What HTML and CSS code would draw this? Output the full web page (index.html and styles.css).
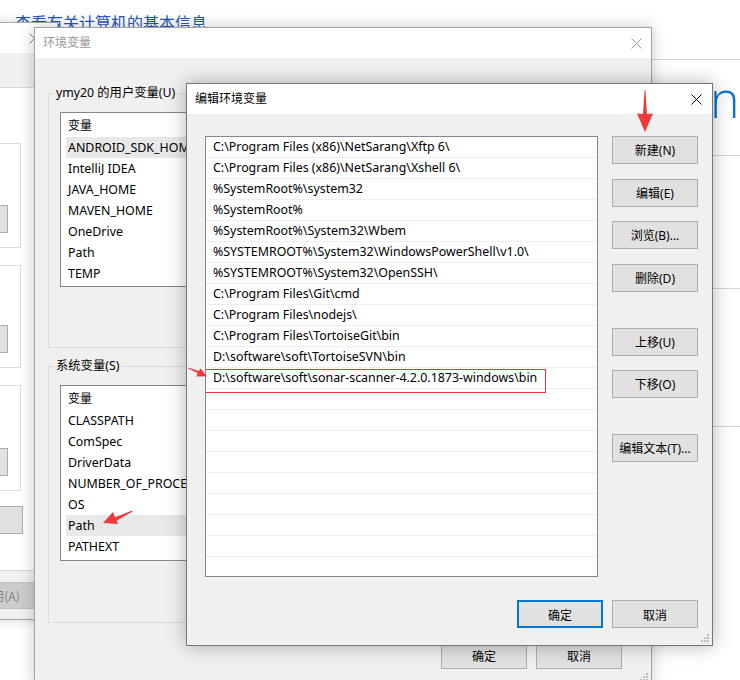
FILE: index.html
```html
<!DOCTYPE html>
<html lang="zh-CN">
<head>
<meta charset="utf-8">
<title>编辑环境变量</title>
<link rel="stylesheet" href="styles.css">
</head>
<body>
<div class="desktop">

  <div class="cp">
    <div class="cp-main">
      <div class="cp-title">查看有关计算机的基本信息</div>
    </div>
    <div class="cp-side">
      <div class="cp-rule rule-a"></div>
      <div class="cp-logo">n</div>
      <div class="cp-rule rule-b"></div>
      <div class="cp-rule rule-c"></div>
      <div class="cp-rule rule-d"></div>
    </div>
  </div>

  <div class="win sys">
    <div class="titlebar sys-title">
      <span class="tb-text"></span>
      <span class="x-btn"><svg width="11" height="11" viewBox="0 0 11 11"><path d="M0.5 0.5L10.5 10.5M10.5 0.5L0.5 10.5" stroke="#8a8a8a" stroke-width="1" fill="none"/></svg></span>
    </div>
    <div class="sys-tabs"></div>
    <div class="sys-page">
      <div class="sys-group g1"><div class="btn sys-btn"></div></div>
      <div class="sys-group g2"><div class="btn sys-btn"></div></div>
      <div class="sys-group g3"><div class="btn sys-btn"></div></div>
      <div class="btn sys-envbtn"></div>
    </div>
    <div class="sys-footer">
      <div class="btn btn-disabled">应用(A)</div>
    </div>
  </div>

  <div class="win env">
    <div class="titlebar">
      <span class="tb-text tb-inactive">环境变量</span>
      <span class="x-btn"><svg width="11" height="11" viewBox="0 0 11 11"><path d="M0.5 0.5L10.5 10.5M10.5 0.5L0.5 10.5" stroke="#9a9a9a" stroke-width="1" fill="none"/></svg></span>
    </div>
    <div class="env-body">
      <fieldset class="group g-user">
        <legend>ymy20 的用户变量(U)</legend>
        <div class="lv lv-user">
          <div class="lv-head">变量</div>
          <div class="lv-row sel">ANDROID_SDK_HOME</div>
          <div class="lv-row">IntelliJ IDEA</div>
          <div class="lv-row">JAVA_HOME</div>
          <div class="lv-row">MAVEN_HOME</div>
          <div class="lv-row">OneDrive</div>
          <div class="lv-row">Path</div>
          <div class="lv-row">TEMP</div>
        </div>
      </fieldset>
      <fieldset class="group g-sys">
        <legend>系统变量(S)</legend>
        <div class="lv lv-sys">
          <div class="lv-head">变量</div>
          <div class="lv-row">CLASSPATH</div>
          <div class="lv-row">ComSpec</div>
          <div class="lv-row">DriverData</div>
          <div class="lv-row">NUMBER_OF_PROCESSORS</div>
          <div class="lv-row">OS</div>
          <div class="lv-row sel">Path</div>
          <div class="lv-row">PATHEXT</div>
        </div>
      </fieldset>
      <div class="env-footer">
        <div class="btn">确定</div>
        <div class="btn">取消</div>
      </div>
    </div>
    <svg class="grip" width="8" height="8" viewBox="0 0 8 8"><g fill="#bdbdbd"><rect x="6" y="0" width="2" height="2"/><rect x="3" y="3" width="2" height="2"/><rect x="6" y="3" width="2" height="2"/><rect x="0" y="6" width="2" height="2"/><rect x="3" y="6" width="2" height="2"/><rect x="6" y="6" width="2" height="2"/></g></svg>
  </div>

  <div class="win edit">
    <div class="titlebar">
      <span class="tb-text">编辑环境变量</span>
      <span class="x-btn x-edit"><svg width="11" height="11" viewBox="0 0 11 11"><path d="M0.5 0.5L10.5 10.5M10.5 0.5L0.5 10.5" stroke="#000" stroke-width="1" fill="none"/></svg></span>
    </div>
    <div class="edit-body">
      <div class="edit-main">
        <div class="pl">
          <div class="pl-row">C:\Program Files (x86)\NetSarang\Xftp 6\</div>
          <div class="pl-row">C:\Program Files (x86)\NetSarang\Xshell 6\</div>
          <div class="pl-row">%SystemRoot%\system32</div>
          <div class="pl-row">%SystemRoot%</div>
          <div class="pl-row">%SystemRoot%\System32\Wbem</div>
          <div class="pl-row">%SYSTEMROOT%\System32\WindowsPowerShell\v1.0\</div>
          <div class="pl-row">%SYSTEMROOT%\System32\OpenSSH\</div>
          <div class="pl-row">C:\Program Files\Git\cmd</div>
          <div class="pl-row">C:\Program Files\nodejs\</div>
          <div class="pl-row">C:\Program Files\TortoiseGit\bin</div>
          <div class="pl-row">D:\software\soft\TortoiseSVN\bin</div>
          <div class="pl-row marked">D:\software\soft\sonar-scanner-4.2.0.1873-windows\bin</div>
          <div class="pl-row"></div>
          <div class="pl-row"></div>
          <div class="pl-row"></div>
          <div class="pl-row"></div>
          <div class="pl-row"></div>
          <div class="pl-row"></div>
          <div class="pl-row"></div>
          <div class="pl-row"></div>
          <div class="pl-row"></div>
          <div class="pl-row"></div>
        </div>
        <div class="edit-btns">
          <div class="btn b-new">新建(N)</div>
          <div class="btn b-edit">编辑(E)</div>
          <div class="btn b-browse">浏览(B)...</div>
          <div class="btn b-del">删除(D)</div>
          <div class="btn b-up">上移(U)</div>
          <div class="btn b-down">下移(O)</div>
          <div class="btn b-text">编辑文本(T)...</div>
        </div>
      </div>
      <div class="edit-footer">
        <div class="btn btn-default">确定</div>
        <div class="btn">取消</div>
      </div>
    </div>
    <svg class="grip" width="8" height="8" viewBox="0 0 8 8"><g fill="#bdbdbd"><rect x="6" y="0" width="2" height="2"/><rect x="3" y="3" width="2" height="2"/><rect x="6" y="3" width="2" height="2"/><rect x="0" y="6" width="2" height="2"/><rect x="3" y="6" width="2" height="2"/><rect x="6" y="6" width="2" height="2"/></g></svg>
  </div>

  <svg class="marks" width="740" height="680" viewBox="0 0 740 680">
    <g fill="#f0393b">
      <polygon points="644.6,90 645.4,90 647,114 653,113.5 645,132 637,113.5 643,114"/>
      <polygon points="132.3,510.4 132.7,511.4 116.8,520.5 118,524 103,523 113,512 115,517.2"/>
      <polygon points="188,367.6 188.3,368.4 197.6,373 196.5,376.6 206.8,376.2 200.4,368.2 199,370.9"/>
    </g>
  </svg>
</div>
</body>
</html>
```

FILE: styles.css
```css
* { box-sizing: border-box; }

html, body {
  margin: 0;
  padding: 0;
}

body {
  width: 740px;
  height: 680px;
  overflow: hidden;
  background: #fff;
  font-family: "Noto Sans", "Noto Sans CJK SC", sans-serif;
  font-size: 12px;
  color: #000;
}

.desktop {
  position: relative;
  width: 740px;
  height: 680px;
  overflow: hidden;
}

/* ---------- control panel page behind ---------- */
.cp {
  display: flex;
  width: 740px;
  height: 680px;
}

.cp-main {
  width: 640px;
  padding: 12px 0 0 15px;
}

.cp-title {
  font-family: "Noto Sans CJK SC", sans-serif;
  font-size: 16px;
  line-height: 20px;
  color: #2256b8;
  white-space: nowrap;
}

.cp-side {
  flex: 1;
  display: flex;
  flex-direction: column;
}

.cp-rule {
  height: 1px;
  background: #d4d4d4;
}

.rule-a { margin-top: 59px; }

.cp-logo {
  margin-top: 14px;
  padding-left: 70px;
  font-family: "Open Sans", "Noto Sans", sans-serif;
  font-weight: 300;
  font-size: 50px;
  line-height: 50px;
  color: #0a74cf;
}

.rule-b { margin-top: 31px; }
.rule-c { margin-top: 132px; }
.rule-d { margin-top: 137px; }

/* ---------- generic window ---------- */
.win {
  position: absolute;
  background: #f0f0f0;
  display: flex;
  flex-direction: column;
}

.titlebar {
  height: 30px;
  flex: none;
  background: #fff;
  display: flex;
  align-items: center;
  justify-content: space-between;
  padding-left: 8px;
}

.tb-text {
  font-family: "Noto Sans CJK SC", sans-serif;
  font-size: 12px;
  line-height: 16px;
  margin-top: -2px;
  white-space: nowrap;
}

.tb-inactive { color: #999; }

.x-btn {
  width: 30px;
  height: 30px;
  display: flex;
  align-items: center;
  justify-content: center;
}

.btn {
  height: 28px;
  background: #e1e1e1;
  border: 1px solid #adadad;
  display: flex;
  align-items: center;
  justify-content: center;
  font-family: "Noto Sans", "Noto Sans CJK SC", sans-serif;
  font-size: 12px;
  white-space: nowrap;
  flex: none;
}

.grip {
  position: absolute;
  right: 3px;
  bottom: 3px;
}

/* ---------- system properties (back) ---------- */
.sys {
  left: -402px;
  top: 22px;
  width: 460px;
  height: 598px;
  border: 1px solid #a9a9a9;
  box-shadow: 0 0 10px rgba(0, 0, 0, 0.18);
}

.sys-title .x-btn {
  width: 46px;
}

.sys-tabs {
  height: 34px;
  flex: none;
  background: #f0f0f0;
}

.sys-page {
  height: 484px;
  flex: none;
  margin: 0 7px;
  background: #fff;
  border: 1px solid #d9d9d9;
  padding: 55px 28px 0 0;
  display: flex;
  flex-direction: column;
  align-items: stretch;
}

.sys-group {
  border: 1px solid #dcdcdc;
  display: flex;
  justify-content: flex-end;
  align-items: flex-end;
  padding: 0 12px 14px 0;
}

.g1 { height: 105px; }
.g2 { height: 103px; margin-top: 17px; }
.g3 { height: 106px; margin-top: 17px; }

.sys-btn { width: 76px; }

.sys-envbtn {
  width: 120px;
  align-self: flex-end;
  margin: 15px -2px 0 0;
}

.sys-footer {
  flex: 1;
  display: flex;
  justify-content: flex-end;
  padding: 11px 16px 0 0;
}

.btn-disabled {
  width: 82px;
  height: 27px;
  background: #cccccc;
  border-color: #bfbfbf;
  color: #838383;
  font-family: "Noto Sans CJK SC", sans-serif;
}

/* ---------- 环境变量 window ---------- */
.env {
  left: 34px;
  top: 27px;
  width: 618px;
  height: 658px;
  border: 1px solid #a3a3a3;
  box-shadow: 0 0 14px rgba(0, 0, 0, 0.22);
}

.env-body {
  flex: 1;
  padding: 0 13px;
  display: flex;
  flex-direction: column;
}

.group {
  margin: 0;
  border: 1px solid #dcdcdc;
  padding: 0 11px 60px 11px;
  min-width: 0;
}

.group legend {
  padding: 0 2px;
  margin-left: -6px;
  line-height: 16px;
  font-family: "Noto Sans", "Noto Sans CJK SC", sans-serif;
  font-size: 12.3px;
  color: #000;
}

.g-user { margin-top: 27px; }
.g-sys { margin-top: 10px; padding-bottom: 61px; }

.lv {
  margin-top: 11px;
  background: #fff;
  border: 1px solid #828790;
  overflow: hidden;
}

.lv-user { height: 175px; }
.lv-sys { height: 176px; }

.lv-head {
  height: 24px;
  line-height: 24px;
  padding-left: 7px;
  font-family: "Noto Sans CJK SC", sans-serif;
}

.lv-row {
  height: 21px;
  line-height: 21px;
  margin-left: 5px;
  padding-left: 2px;
  font-size: 12.4px;
  white-space: nowrap;
}

.lv-row.sel { background: #e8e8e8; }

.env-footer {
  display: flex;
  justify-content: flex-end;
  gap: 9px;
  margin: 18px 16px 0 0;
}

.env-footer .btn {
  width: 86px;
  font-family: "Noto Sans CJK SC", sans-serif;
}

/* ---------- 编辑环境变量 dialog ---------- */
.edit {
  left: 186px;
  top: 83px;
  width: 527px;
  height: 563px;
  border: 1px solid #777;
  box-shadow: 0 0 18px rgba(0, 0, 0, 0.3);
}

.x-edit { margin-right: 1px; }

.edit-body {
  flex: 1;
  padding: 22px 14px 0 18px;
  display: flex;
  flex-direction: column;
}

.edit-main {
  display: flex;
  gap: 14px;
}

.pl {
  width: 393px;
  height: 441px;
  background: #fff;
  border: 1px solid #828790;
  overflow: hidden;
}

.pl-row {
  position: relative;
  height: 21px;
  line-height: 20px;
  margin: 0 1px;
  padding-left: 6px;
  border-bottom: 1px solid #efefef;
  font-size: 12.4px;
  white-space: nowrap;
}

.pl-row.marked::after {
  content: "";
  position: absolute;
  left: -2px;
  top: 1px;
  width: 339px;
  height: 22px;
  border: 1px solid #e8333a;
}

.edit-btns {
  width: 86px;
  display: flex;
  flex-direction: column;
}

.b-edit { margin-top: 15px; }
.b-browse { margin-top: 14px; }
.b-del { margin-top: 15px; }
.b-up { margin-top: 36px; }
.b-down { margin-top: 14px; }
.b-text { margin-top: 36px; }

.edit-footer {
  display: flex;
  justify-content: flex-end;
  gap: 9px;
  margin-top: 23px;
}

.edit-footer .btn {
  width: 86px;
  font-family: "Noto Sans CJK SC", sans-serif;
}

.btn-default {
  border: 2px solid #0078d7;
}

/* ---------- annotation arrows ---------- */
.marks {
  position: absolute;
  left: 0;
  top: 0;
  pointer-events: none;
}
```
